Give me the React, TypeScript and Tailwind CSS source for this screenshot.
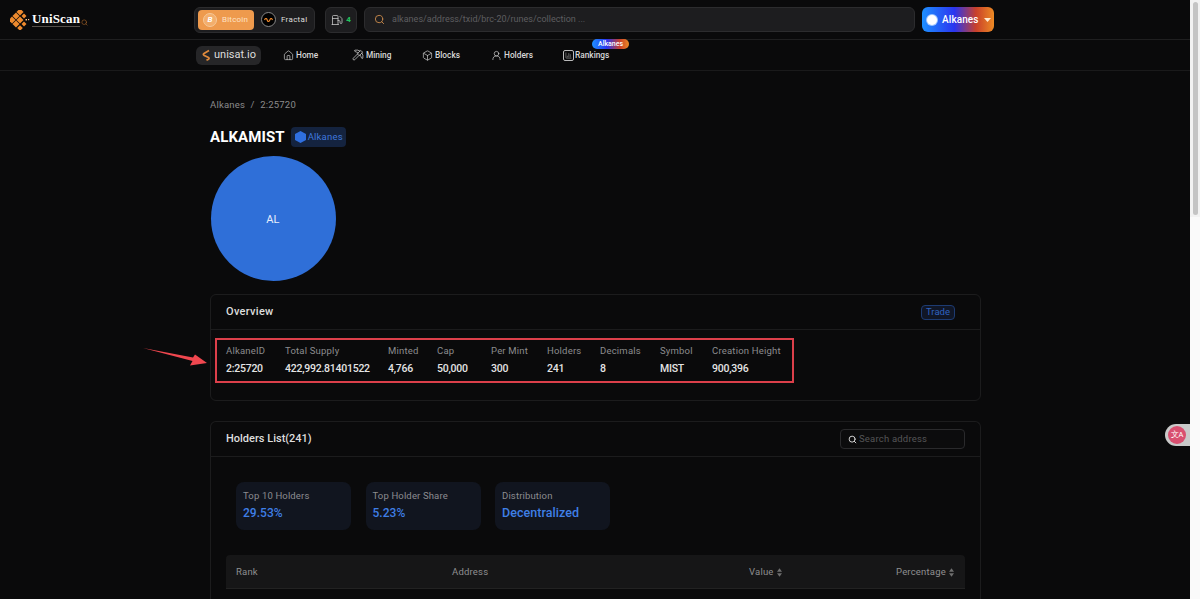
import { Box, Fuel, Home, Pickaxe, Search, UserRound, ChartColumn } from "lucide-react";

const STATS = [
  { label: "AlkaneID", value: "2:25720", width: "w-[59px]" },
  { label: "Total Supply", value: "422,992.81401522", width: "w-[103px]" },
  { label: "Minted", value: "4,766", width: "w-[49px]" },
  { label: "Cap", value: "50,000", width: "w-[54px]" },
  { label: "Per Mint", value: "300", width: "w-[56px]" },
  { label: "Holders", value: "241", width: "w-[53px]" },
  { label: "Decimals", value: "8", width: "w-[60px]" },
  { label: "Symbol", value: "MIST", width: "w-[52px]" },
  { label: "Creation Height", value: "900,396", width: "w-[68px]" },
];

const NAV_ITEMS = [
  { label: "Home", icon: Home, width: "w-[69px]" },
  { label: "Mining", icon: Pickaxe, width: "w-[70px]" },
  { label: "Blocks", icon: Box, width: "w-[69px]" },
  { label: "Holders", icon: UserRound, width: "w-[72px]" },
];

const SUMMARY = [
  { label: "Top 10 Holders", value: "29.53%", size: "text-[12px]" },
  { label: "Top Holder Share", value: "5.23%", size: "text-[12px]" },
  { label: "Distribution", value: "Decentralized", size: "text-[12.5px]" },
];

function Logo() {
  const cells = [
    [10, 2, 5], [14, 6, 3.5], [6, 6, 5], [2, 10, 5], [10, 10, 5], [6, 14, 5], [14, 14, 3.5], [10, 18, 4],
  ];
  return (
    <svg width="20" height="20" viewBox="0 0 20 20" className="shrink-0">
      {cells.map(([x, y, s]) => (
        <rect key={`${x}-${y}`} x={x - s / 2} y={y - s / 2} width={s} height={s} fill="#ee8a2e" transform={`rotate(45 ${x} ${y})`} />
      ))}
      <rect x="15.5" y="9" width="1.5" height="1.5" fill="#f6c08a" />
      <rect x="18" y="9" width="1.2" height="1.2" fill="#f6c08a" />
    </svg>
  );
}

function SortIcon() {
  return (
    <svg width="5" height="9" viewBox="0 0 6 10" className="ml-[3px] fill-[#6f6f6f]">
      <path d="M3 0 6 4H0zM3 10 0 6h6z" />
    </svg>
  );
}

export default function App() {
  return (
    <div className="flex h-[599px] w-[1200px] overflow-hidden bg-[#0a0a0b] font-['Roboto',sans-serif] text-white">
      <div className="relative w-[1190px] shrink-0">
        <header className="flex h-10 items-center border-b border-[#1f1f20]">
          <div className="flex w-[194px] items-center pl-[10px]">
            <Logo />
            <span className="ml-[2px] border-b border-[#55504a] font-['Liberation_Serif',serif] text-[13px] font-bold leading-[14px] tracking-[0.15px] text-white">UniScan</span>
            <Search size={7} className="ml-[1px] mt-[5px] text-[#a9652a]" />
          </div>
          <div className="flex h-[26px] w-[121px] items-center rounded-md border border-[#2c2c2e] bg-[#1d1d1f] pl-[3px]">
            <div className="flex h-5 w-[56px] items-center gap-[5px] rounded bg-[#ee9a4d] pl-[5px]">
              <span className="flex h-[14px] w-[14px] items-center justify-center rounded-full border border-[#f6c898] bg-[#f3ae6c] text-[8px] font-bold italic">B</span>
              <span className="text-[8px] tracking-[0.2px] text-[#ffe3c6]">Bitcoin</span>
            </div>
            <span className="ml-[7px] flex h-[15px] w-[15px] items-center justify-center rounded-full border border-[#888] bg-black">
              <svg width="9" height="4" viewBox="0 0 9 4" className="fill-none stroke-[#f08a2c]">
                <path d="M.5 2c1-2 2-2 2.7 0s1.600 2 2.600 0 1.700-2 2.700 0" strokeWidth="1.200" />
              </svg>
            </span>
            <span className="ml-[5px] text-[8px] tracking-[0.3px] text-[#ddd]">Fractal</span>
          </div>
          <div className="ml-[10px] flex h-[26px] w-[32px] items-center justify-center gap-[3px] rounded-md border border-[#2c2c2e] bg-[#1d1d1f]">
            <Fuel size={12} strokeWidth={1.5} className="text-[#ccc]" />
            <span className="text-[8px] font-bold text-[#22c55e]">4</span>
          </div>
          <div className="ml-[7px] flex h-[25px] w-[551px] items-center rounded-md border border-[#2c2c2e] bg-[#1d1d1f] pl-[9px]">
            <Search size={11} strokeWidth={2} className="text-[#c98a4b]" />
            <span className="ml-[7px] pt-px text-[9px] tracking-[0.02px] text-[#5e5e60]">alkanes/address/txid/brc-20/runes/collection ...</span>
          </div>
          <div className="ml-[7px] flex h-[25px] w-[72px] items-center rounded-md bg-[linear-gradient(90deg,#1e90ff_0%,#2a35f0_45%,#c9402a_75%,#ec8a24_100%)] pl-[5px]">
            <span className="h-[10px] w-[10px] rounded-full bg-white ring-1 ring-[#9fc4ff]" />
            <span className="ml-[5px] text-[10px] font-medium tracking-[0.1px]">Alkanes</span>
            <svg width="7" height="4" viewBox="0 0 7 4" className="ml-[5px] fill-[#ffe9d2]">
              <path d="M0 0h7L3.500 4z" />
            </svg>
          </div>
        </header>

        <nav className="flex h-[31px] items-center border-b border-[#1a1a1b] pl-[196px]">
          <div className="flex h-[19px] w-[65px] items-center rounded-md bg-[#262628] pl-[6px]">
            <svg width="9" height="12" viewBox="0 0 9 12" className="fill-none stroke-[#e08a3c]">
              <path d="M7 1.500 2 4.500c-1 .7-.6 1.500.3 2l4.200 2c.8.500.6 1.300 0 1.700l-2 1" strokeWidth="1.800" />
            </svg>
            <span className="ml-[3px] text-[11px] text-[#ddd]">unisat.io</span>
          </div>
          <div className="ml-[22px] flex items-center">
            {NAV_ITEMS.map((item) => (
              <div key={item.label} className={`flex items-center gap-[2px] ${item.width}`}>
                <item.icon size={item.label === "Mining" ? 12 : 11} strokeWidth={1.4} className="text-[#ddd]" />
                <span className="text-[8.3px] font-medium text-[#d8d8d8]">{item.label}</span>
              </div>
            ))}
            <div className="relative flex items-center gap-[1px]">
              <span className="flex h-[11px] w-[11px] items-center justify-center rounded-[2px] border border-[#bbb]">
                <ChartColumn size={7} strokeWidth={1.5} className="text-[#ccc]" />
              </span>
              <span className="pt-px text-[8.3px] font-medium text-[#d8d8d8]">Rankings</span>
              <span className="absolute left-[29px] top-[-9px] rounded-full bg-[linear-gradient(90deg,#1e90ff_0%,#2a35f0_40%,#c9402a_75%,#ec8a24_100%)] px-[6px] text-[7px] font-medium leading-[10px]">Alkanes</span>
            </div>
          </div>
        </nav>

        <main className="ml-[210px] w-[771px]">
          <div className="mt-[26px] flex h-[16px] items-center gap-[5.5px] pt-px text-[9.5px] tracking-[0.2px] text-[#8a8a8c]">
            <span>Alkanes</span>
            <span>/</span>
            <span>2:25720</span>
          </div>
          <div className="mt-[14px] flex h-[20px] items-center">
            <h1 className="pt-px text-[15px] font-bold tracking-[0.1px]">ALKAMIST</h1>
            <span className="ml-[6px] flex h-[20px] w-[55px] items-center rounded bg-[#14233f] pl-[4px]">
              <svg width="11" height="12" viewBox="0 0 11 12" className="fill-[#2f6fe0]">
                <path d="M5.500 0 11 3v6l-5.500 3L0 9V3z" />
              </svg>
              <span className="ml-[2px] text-[9.5px] tracking-[0.2px] text-[#3f78dd]">Alkanes</span>
            </span>
          </div>
          <div className="ml-px mt-[9px] flex h-[125px] w-[125px] items-center justify-center rounded-full bg-[#2f6fd8] pr-px pt-[3px] text-[11px] tracking-[0.3px] text-[#e8eefb]">AL</div>

          <section className="mt-[13px] h-[107px] rounded-md border border-[#1c1c1d]">
            <div className="flex h-[35px] items-center justify-between border-b border-[#1c1c1d] pl-[15px] pr-[25px]">
              <h2 className="text-[11px] font-medium tracking-[0.3px] text-[#dedede]">Overview</h2>
              <span className="flex h-[15px] w-[34px] items-center justify-center rounded-sm border border-[#1d3b72] bg-[#101626] text-[9.5px] text-[#2f62c0]">Trade</span>
            </div>
            <div className="ml-[4px] mt-[8px] flex h-[45px] w-[579px] items-center border-2 border-[#dc3f4a] pl-[9px]">
              {STATS.map((stat) => (
                <div key={stat.label} className={`shrink-0 ${stat.width}`}>
                  <div className="whitespace-nowrap text-[9.5px] tracking-[0.2px] text-[#8c8c8e]">{stat.label}</div>
                  <div className="mt-[3px] whitespace-nowrap text-[10.5px] font-medium tracking-[-0.25px] text-[#e4e4e4]">{stat.value}</div>
                </div>
              ))}
            </div>
          </section>

          <section className="mt-[20px] h-[200px] rounded-t-md border border-b-0 border-[#1c1c1d]">
            <div className="flex h-[35px] items-center justify-between border-b border-[#1c1c1d] px-[15px]">
              <h2 className="pt-px text-[11px] font-medium text-[#dedede]">Holders List(241)</h2>
              <div className="flex h-[20px] w-[125px] items-center rounded border border-[#2a2a2c] bg-[#0c0c0d] pl-[7px]">
                <Search size={9} strokeWidth={2.5} className="text-[#ddd]" />
                <span className="ml-[2px] pt-px text-[9.5px] tracking-[0.2px] text-[#555557]">Search address</span>
              </div>
            </div>
            <div className="ml-[25px] mt-[25px] flex gap-[14.5px]">
              {SUMMARY.map((card) => (
                <div key={card.label} className="h-[48px] w-[115px] rounded-lg bg-[#11151f] pl-[7px] pt-[7px]">
                  <div className="text-[9.5px] tracking-[0.15px] text-[#8c8c90]">{card.label}</div>
                  <div className={`mt-[2px] font-medium leading-[16px] tracking-[0.05px] text-[#3f7fe6] ${card.size}`}>{card.value}</div>
                </div>
              ))}
            </div>
            <div className="ml-[15px] mt-[25px] flex h-[34px] w-[739px] items-center rounded-t border-b border-[#222] bg-[#161617] pl-[10px] pt-px text-[9.5px] tracking-[0.2px] text-[#8f8f90]">
              <span className="w-[216px]">Rank</span>
              <span className="w-[297px]">Address</span>
              <span className="flex w-[147px] items-center">Value<SortIcon /></span>
              <span className="flex items-center">Percentage<SortIcon /></span>
            </div>
          </section>
        </main>

        <svg width="66" height="22" viewBox="0 0 66 22" className="absolute left-[143px] top-[346px] fill-[#f0474f]">
          <path d="M0 2 50 11.500 52 8.500 64 17 47 19.500 49.500 15z" />
        </svg>

        <div className="absolute left-[1165px] top-[424px] flex h-[22px] w-[25px] items-center rounded-l-full bg-[#c9c9c9] pl-[3px]">
          <span className="flex h-[18px] w-[18px] items-center justify-center rounded-full bg-[#d94f70] text-[7.5px] leading-[8px] text-white">文A</span>
        </div>
      </div>
      <div className="h-full w-[10px] bg-[#fafafa]">
        <div className="h-[217px] bg-[#f2f2f2] pl-[3px] pr-[2px] pt-[2px]">
          <div className="h-[213px] rounded-full bg-[#c4c4c4]" />
        </div>
      </div>
    </div>
  );
}
